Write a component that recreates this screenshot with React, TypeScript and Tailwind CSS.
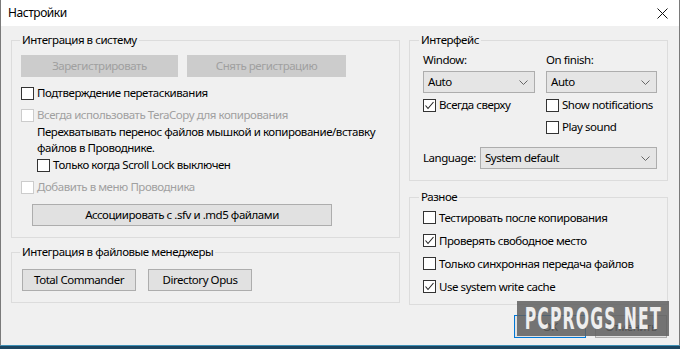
import React from "react";

function Box({ checked, disabled }: { checked?: boolean; disabled?: boolean }) {
  return (
    <span
      className={`w-[13px] h-[13px] shrink-0 border bg-white flex items-center justify-center ${
        disabled ? "border-[#cccccc]" : "border-[#333333]"
      }`}
    >
      {checked && (
        <svg width="11" height="11" viewBox="0 0 11 11">
          <polyline points="1.5,5.5 4,8.5 9.5,2" fill="none" stroke="#222" strokeWidth="1.1" />
        </svg>
      )}
    </span>
  );
}

function Check({
  label,
  checked,
  disabled,
  className = "",
}: {
  label: string;
  checked?: boolean;
  disabled?: boolean;
  className?: string;
}) {
  return (
    <div className={`flex items-center ${className}`}>
      <Box checked={checked} disabled={disabled} />
      <span className={`ml-[3px] whitespace-nowrap ${disabled ? "text-[#a0a0a0]" : "text-black"}`}>{label}</span>
    </div>
  );
}

function Select({ value, className = "" }: { value: string; className?: string }) {
  return (
    <div
      className={`h-[22px] bg-[#e5e5e5] border border-[#adadad] flex items-center justify-between pl-[4px] pr-[6px] ${className}`}
    >
      <span>{value}</span>
      <svg width="9" height="5" viewBox="0 0 9 5">
        <polyline points="0.5,0.5 4.5,4.5 8.5,0.5" fill="none" stroke="#666" strokeWidth="1" />
      </svg>
    </div>
  );
}

function Btn({ label, className = "" }: { label: string; className?: string }) {
  return (
    <div className={`h-[22px] bg-[#e1e1e1] border border-[#adadad] flex items-center justify-center whitespace-nowrap ${className}`}>
      {label}
    </div>
  );
}

// legend sits inside the fieldset padding, so each group nudges it back to x≈10px from the border
function Group({
  title,
  className = "",
  legendClass = "",
  children,
}: {
  title: string;
  className?: string;
  legendClass?: string;
  children: React.ReactNode;
}) {
  return (
    <fieldset className={`border border-[#dcdcdc] ${className}`}>
      <legend className={`px-[2px] leading-4 ${legendClass}`}>{title}</legend>
      {children}
    </fieldset>
  );
}

export default function App() {
  return (
    <div className="w-[680px] h-[349px] bg-[#1c4560] overflow-hidden font-['Noto_Sans',sans-serif] text-[11.5px] tracking-[-0.45px] text-black">
      <div className="relative h-[346px] bg-[#f0f0f0] border-x border-b border-x-[#7a7a7a] border-b-[#3c8fb5] flex flex-col">
        <div className="h-[26px] bg-white flex items-center justify-between pl-[7px] pr-[11px] shrink-0">
          <span className="text-[12px]">Настройки</span>
          <svg width="11" height="11" viewBox="0 0 11 11">
            <path d="M0.5 0.5 L10.5 10.5 M10.5 0.5 L0.5 10.5" stroke="#111" strokeWidth="1" />
          </svg>
        </div>

        <div className="flex pl-[10px] gap-[9px] mt-[6px]">
          <div className="w-[389px] flex flex-col">
            <Group title="Интеграция в систему" className="px-[9px] pt-[7px] pb-[11px]" legendClass="-ml-[1px]">
              <div className="flex gap-[9px]">
                <div className="w-[157px] h-[22px] bg-[#cccccc] text-[#a0a0a0] flex items-center justify-center">
                  Зарегистрировать
                </div>
                <div className="w-[159px] h-[22px] bg-[#cccccc] text-[#a0a0a0] flex items-center justify-center">
                  Снять регистрацию
                </div>
              </div>
              <Check label="Подтверждение перетаскивания" className="h-5 mt-[6px]" />
              <Check label="Всегда использовать TeraCopy для копирования" disabled className="h-5 mt-[2px]" />
              <p className="ml-[16px] leading-4 -mt-[1px] whitespace-nowrap">
                Перехватывать перенос файлов мышкой и копирование/вставку
                <br />
                файлов в Проводнике.
              </p>
              <Check label="Только когда Scroll Lock выключен" className="h-5 ml-[16px] -mt-[1px]" />
              <Check label="Добавить в меню Проводника" disabled className="h-5 mt-[2px]" />
              <Btn label="Ассоциировать с .sfv и .md5 файлами" className="w-[300px] ml-[11px] mt-[7px]" />
            </Group>
            <Group
              title="Интеграция в файловые менеджеры"
              className="mt-[6px] px-[10px] pt-[9px] pb-[11px]"
              legendClass="-ml-[2px]"
            >
              <div className="flex gap-[12px]">
                <Btn label="Total Commander" className="w-[114px]" />
                <Btn label="Directory Opus" className="w-[104px]" />
              </div>
            </Group>
          </div>

          <div className="w-[259px] flex flex-col">
            <Group title="Интерфейс" className="pl-[13px] pr-[10px] pt-[4px] pb-[11px]" legendClass="-ml-[4px]">
              <div className="flex gap-[11px]">
                <div className="w-[112px] flex flex-col">
                  <span className="leading-4">Window:</span>
                  <Select value="Auto" className="mt-[3px]" />
                  <Check label="Всегда сверху" checked className="h-5 mt-[2px]" />
                </div>
                <div className="w-[111px] flex flex-col">
                  <span className="leading-4">On finish:</span>
                  <Select value="Auto" className="mt-[3px]" />
                  <Check label="Show notifications" className="h-5 mt-[2px]" />
                  <Check label="Play sound" className="h-5 mt-[2px]" />
                </div>
              </div>
              <div className="flex items-center mt-[10px]">
                <span className="w-[57px] whitespace-nowrap">Language:</span>
                <Select value="System default" className="w-[177px]" />
              </div>
            </Group>
            <Group title="Разное" className="mt-[8px] pl-[13px] pt-[1px] pb-[6px]" legendClass="-ml-[4px]">
              <Check label="Тестировать после копирования" className="h-[23px]" />
              <Check label="Проверять свободное место" checked className="h-[23px]" />
              <Check label="Только синхронная передача файлов" className="h-[23px]" />
              <Check label="Use system write cache" checked className="h-[23px]" />
            </Group>
          </div>
        </div>

        <div className="flex justify-end gap-[9px] pr-[12px] mt-[10px]">
          <div className="w-[72px] h-[23px] bg-[#e1e1e1] border border-[#0078d7] flex items-center justify-center">
            OK
          </div>
          <Btn label="Отменить" className="w-[72px] h-[23px]" />
        </div>

        <div className="absolute left-[516px] top-[301px] w-[152px] h-[35px] bg-[#5f5f5f]/85 flex items-center justify-center overflow-hidden">
          <span className="font-['DejaVu_Sans_Condensed',sans-serif] font-bold text-[30px] text-[#eeeeee] tracking-[2px] scale-x-[0.58] whitespace-nowrap">
            PCPROGS.NET
          </span>
        </div>
      </div>
    </div>
  );
}
